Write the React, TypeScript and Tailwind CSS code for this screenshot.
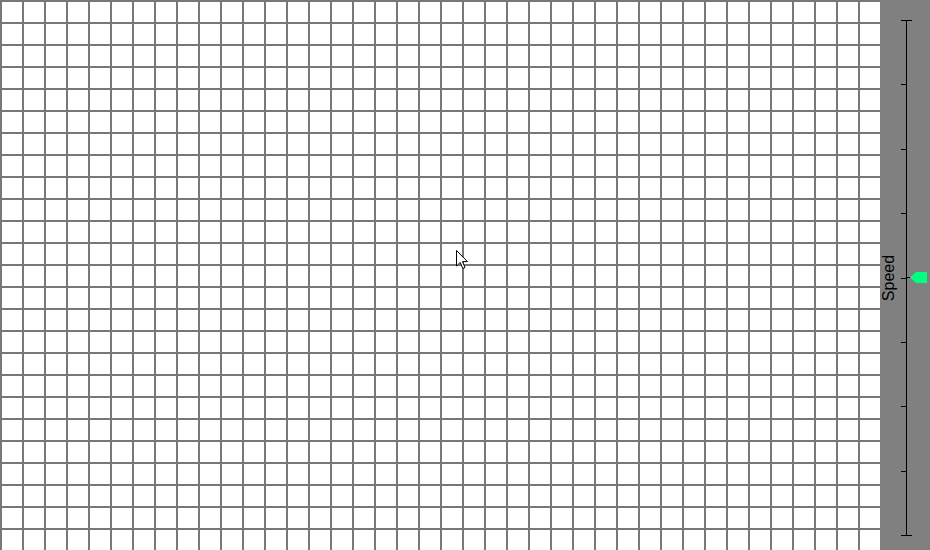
import React from "react";

const ticks = [0, 1, 2, 3, 4, 5, 6, 7, 8].map((i) => 20 + (515 * i) / 8);

const SpeedSlider = () => {
  return (
    <div className="flex h-[550px] w-[50px] shrink-0 bg-[#808080]">
      <div className="flex w-[18px] items-center justify-center pt-[5px]">
        <span
          className="block -rotate-90 whitespace-nowrap text-[16px] leading-none text-black"
          style={{ fontFamily: '"Liberation Sans", Arial, sans-serif' }}
        >
          Speed
        </span>
      </div>
      <svg width="32" height="550" viewBox="0 0 32 550" className="block">
        <line x1="8.5" y1="20" x2="8.5" y2="536" stroke="#000" strokeWidth="1" />
        <line x1="3" y1="20.5" x2="14" y2="20.5" stroke="#000" strokeWidth="1" />
        <line x1="3" y1="535.5" x2="14" y2="535.5" stroke="#000" strokeWidth="1" />
        {ticks.slice(1, 8).map((y) => (
          <line key={y} x1="3" y1={Math.round(y) + 0.5} x2="8" y2={Math.round(y) + 0.5} stroke="#000" strokeWidth="1" />
        ))}
        <line x1="8" y1="277.5" x2="12" y2="277.5" stroke="#000" strokeWidth="1" />
        <polygon points="12,277.5 18,272 29,272 29,283 18,283" fill="#00ff80" />
      </svg>
    </div>
  );
};

export default function App() {
  return (
    <div className="flex h-[550px] w-[930px] overflow-hidden bg-white">
      <div className="relative h-[550px] w-[880px] shrink-0 bg-white bg-[linear-gradient(to_right,#787878_2px,transparent_2px),linear-gradient(to_bottom,#787878_2px,transparent_2px)] bg-[size:22px_22px]">
        <svg width="13" height="20" viewBox="0 0 13 20" className="absolute left-[456px] top-[250px]">
          <path
            d="M0.5 0.5 L0.5 16 L4.2 12.4 L6.8 18.5 L9 17.6 L6.5 11.6 L11.5 11.6 Z"
            fill="#fff"
            stroke="#000"
            strokeWidth="1"
            strokeLinejoin="miter"
          />
        </svg>
      </div>
      <SpeedSlider />
    </div>
  );
}
